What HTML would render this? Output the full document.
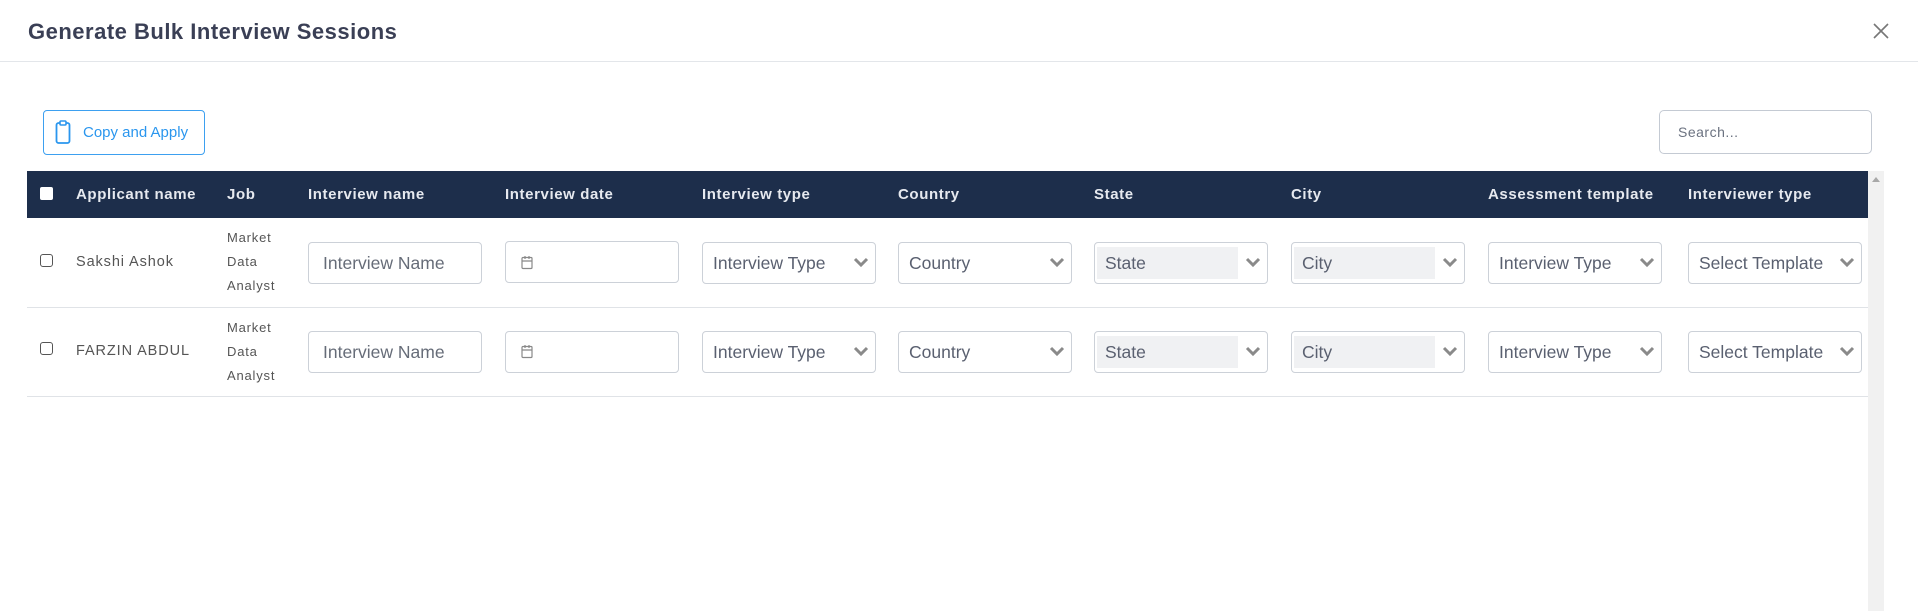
<!DOCTYPE html>
<html><head><meta charset="utf-8"><style>
*{box-sizing:border-box;margin:0;padding:0}
body{width:1918px;height:611px;overflow:hidden;background:#fff;font-family:"Liberation Sans",sans-serif;position:relative}
.a{position:absolute}
.title{left:28px;top:19px;font-size:22px;font-weight:bold;color:#3a3f55;letter-spacing:0.5px}
.hl{left:0;top:61px;width:1918px;height:1px;background:#e3e6ea}
.btn{left:43px;top:110px;width:162px;height:45px;border:1px solid #3da0f0;border-radius:4px;color:#2a96ee;font-size:15px;line-height:43px;padding-left:39px}
.search{left:1659px;top:110px;width:213px;height:44px;border:1px solid #c4cad3;border-radius:5px;font-size:14px;color:#6b7280;line-height:42px;padding-left:18px;letter-spacing:0.5px}
.thead{left:27px;top:171px;width:1841px;height:47px;background:#1d2e4b}
.th{top:186px;color:#e6e9ef;font-size:15px;font-weight:bold;letter-spacing:0.6px}
.sb{left:1868px;top:171px;width:16px;height:440px;background:#f1f1f1}
.rl{left:27px;width:1841px;height:1px;background:#e0e3e7}
.cb{width:13px;height:13px;border:1.5px solid #555;border-radius:3px}
.txt{font-size:14.5px;color:#555;letter-spacing:0.9px}
.job{font-size:13px;color:#555;line-height:24px;letter-spacing:0.8px}
.inp{width:174px;height:42px;border:1px solid #ccd1d8;border-radius:4px;font-size:17.5px;color:#666c78;line-height:40px;padding-left:14px}
.sel{width:174px;height:42px;border:1px solid #ccd1d8;border-radius:4px;font-size:17.5px;color:#5a6070;line-height:40px;padding-left:10px;overflow:hidden;white-space:nowrap}
.sel svg{position:absolute;right:6px;top:13px}
.gray{position:absolute;left:2px;top:4px;width:141px;height:32px;background:#f0f1f3}
.sel span{position:relative}
</style></head><body>
<div class="a title">Generate Bulk Interview Sessions</div>
<svg class="a" style="left:1873px;top:23px" width="16" height="16" viewBox="0 0 16 16"><path d="M1 1L15 15M15 1L1 15" stroke="#777" stroke-width="1.6"/></svg>
<div class="a hl"></div>
<div class="a btn">Copy and Apply</div>
<svg class="a" style="left:55px;top:120px" width="16" height="25" viewBox="0 0 16 25"><rect x="1.5" y="3" width="13" height="20" rx="2" fill="none" stroke="#2a96ee" stroke-width="1.8"/><rect x="5" y="1" width="6" height="4" rx="1" fill="#fff" stroke="#2a96ee" stroke-width="1.6"/></svg>
<div class="a search">Search...</div>
<div class="a thead"></div>
<div class="a sb"></div>
<svg class="a" style="left:1872px;top:176px" width="8" height="6"><path d="M0 6L4 1L8 6Z" fill="#a8a8a8"/></svg>
<div class="a" style="left:40px;top:187px;width:13px;height:13px;background:#fff;border-radius:2px"></div>
<div class="a th" style="left:76px">Applicant name</div>
<div class="a th" style="left:227px">Job</div>
<div class="a th" style="left:308px">Interview name</div>
<div class="a th" style="left:505px">Interview date</div>
<div class="a th" style="left:702px">Interview type</div>
<div class="a th" style="left:898px">Country</div>
<div class="a th" style="left:1094px">State</div>
<div class="a th" style="left:1291px">City</div>
<div class="a th" style="left:1488px">Assessment template</div>
<div class="a th" style="left:1688px">Interviewer type</div>

<div class="a rl" style="top:307px"></div>
<div class="a rl" style="top:396px"></div>

<!-- row 1 -->
<div class="a cb" style="left:40px;top:254px"></div>
<div class="a txt" style="left:76px;top:254px">Sakshi Ashok</div>
<div class="a job" style="left:227px;top:226px">Market<br>Data<br>Analyst</div>
<div class="a inp" style="left:308px;top:242px">Interview Name</div>
<div class="a inp" style="left:505px;top:241px"></div>
<svg class="a" style="left:521px;top:255px" width="12" height="15" viewBox="0 0 12 15"><rect x="1" y="2.5" width="10" height="11" rx="1" fill="none" stroke="#888" stroke-width="1.2"/><path d="M1 6H11M4 1V4M8 1V4" stroke="#888" stroke-width="1.2"/></svg>
<div class="a sel" style="left:702px;top:242px"><span>Interview Type</span><svg width="16" height="12"><path d="M2 3L8 9L14 3" fill="none" stroke="#8a8a8a" stroke-width="3"/></svg></div>
<div class="a sel" style="left:898px;top:242px"><span>Country</span><svg width="16" height="12"><path d="M2 3L8 9L14 3" fill="none" stroke="#8a8a8a" stroke-width="3"/></svg></div>
<div class="a sel" style="left:1094px;top:242px"><div class="gray"></div><span>State</span><svg width="16" height="12"><path d="M2 3L8 9L14 3" fill="none" stroke="#8a8a8a" stroke-width="3"/></svg></div>
<div class="a sel" style="left:1291px;top:242px"><div class="gray"></div><span>City</span><svg width="16" height="12"><path d="M2 3L8 9L14 3" fill="none" stroke="#8a8a8a" stroke-width="3"/></svg></div>
<div class="a sel" style="left:1488px;top:242px"><span>Interview Type</span><svg width="16" height="12"><path d="M2 3L8 9L14 3" fill="none" stroke="#8a8a8a" stroke-width="3"/></svg></div>
<div class="a sel" style="left:1688px;top:242px"><span>Select Template</span><svg width="16" height="12" style="background:#fff"><path d="M2 3L8 9L14 3" fill="none" stroke="#8a8a8a" stroke-width="3"/></svg></div>

<!-- row 2 -->
<div class="a cb" style="left:40px;top:342px"></div>
<div class="a txt" style="left:76px;top:343px">FARZIN ABDUL</div>
<div class="a job" style="left:227px;top:316px">Market<br>Data<br>Analyst</div>
<div class="a inp" style="left:308px;top:331px">Interview Name</div>
<div class="a inp" style="left:505px;top:331px"></div>
<svg class="a" style="left:521px;top:344px" width="12" height="15" viewBox="0 0 12 15"><rect x="1" y="2.5" width="10" height="11" rx="1" fill="none" stroke="#888" stroke-width="1.2"/><path d="M1 6H11M4 1V4M8 1V4" stroke="#888" stroke-width="1.2"/></svg>
<div class="a sel" style="left:702px;top:331px"><span>Interview Type</span><svg width="16" height="12"><path d="M2 3L8 9L14 3" fill="none" stroke="#8a8a8a" stroke-width="3"/></svg></div>
<div class="a sel" style="left:898px;top:331px"><span>Country</span><svg width="16" height="12"><path d="M2 3L8 9L14 3" fill="none" stroke="#8a8a8a" stroke-width="3"/></svg></div>
<div class="a sel" style="left:1094px;top:331px"><div class="gray"></div><span>State</span><svg width="16" height="12"><path d="M2 3L8 9L14 3" fill="none" stroke="#8a8a8a" stroke-width="3"/></svg></div>
<div class="a sel" style="left:1291px;top:331px"><div class="gray"></div><span>City</span><svg width="16" height="12"><path d="M2 3L8 9L14 3" fill="none" stroke="#8a8a8a" stroke-width="3"/></svg></div>
<div class="a sel" style="left:1488px;top:331px"><span>Interview Type</span><svg width="16" height="12"><path d="M2 3L8 9L14 3" fill="none" stroke="#8a8a8a" stroke-width="3"/></svg></div>
<div class="a sel" style="left:1688px;top:331px"><span>Select Template</span><svg width="16" height="12" style="background:#fff"><path d="M2 3L8 9L14 3" fill="none" stroke="#8a8a8a" stroke-width="3"/></svg></div>
</body></html>
